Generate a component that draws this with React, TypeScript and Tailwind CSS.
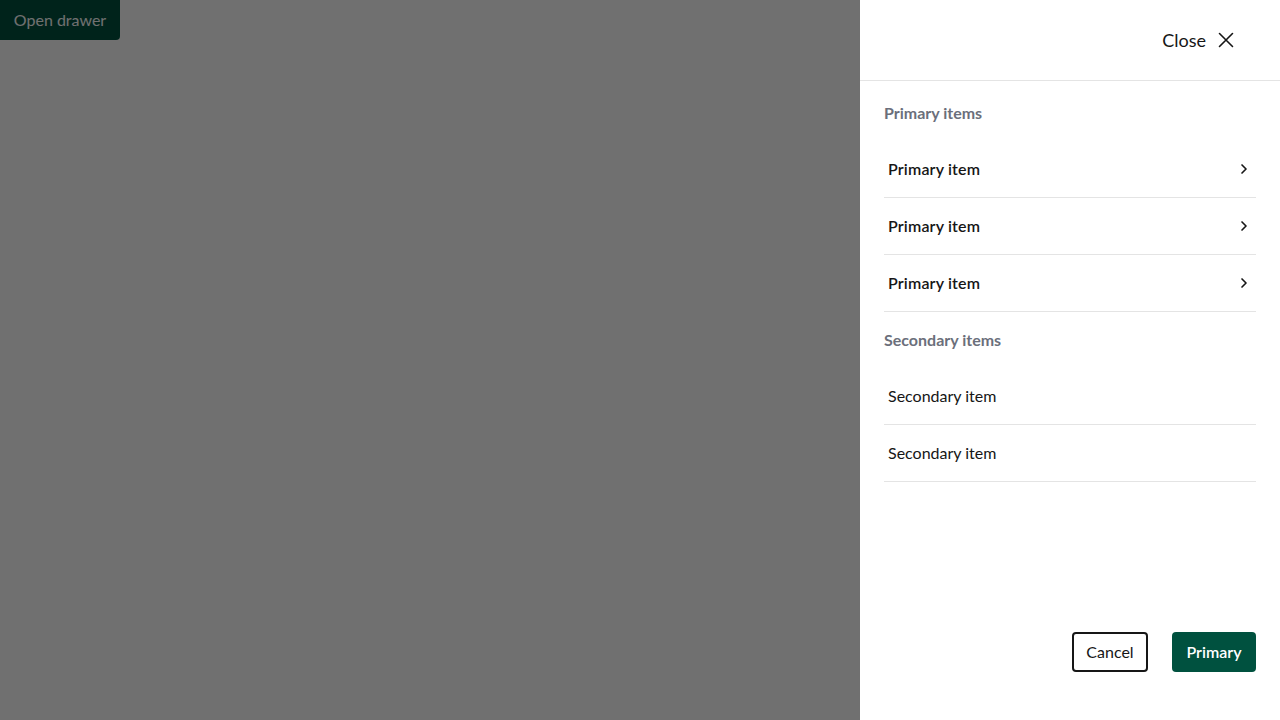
import { ChevronRight } from "lucide-react";

const primaryItems = ["Primary item", "Primary item", "Primary item"];
const secondaryItems = ["Secondary item", "Secondary item"];

function SectionHeading({ children }: { children: string }) {
  return (
    <div className="h-14 flex items-center text-base font-bold text-[#6b6f7b]">
      {children}
    </div>
  );
}

export default function App() {
  return (
    <div className="relative w-[1280px] h-[720px] bg-white overflow-hidden font-['Lato','Noto_Sans',sans-serif]">
      <button className="h-10 w-[120px] bg-[#00513f] text-white text-base rounded-br-sm">
        Open drawer
      </button>

      {/* Overlay */}
      <div className="absolute inset-0 bg-black/[0.56]" />

      {/* Drawer */}
      <aside className="absolute top-0 right-0 bottom-0 w-[420px] bg-white flex flex-col">
        <header className="h-[81px] shrink-0 flex items-center justify-end pr-[46px] border-b border-[#e4e4e4]">
          <button className="flex items-center gap-3 text-[18px] text-[#161616]">
            <span>Close</span>
            <svg width="16" height="16" viewBox="0 0 16 16" fill="none" stroke="#161616" strokeWidth="1.6" strokeLinecap="round">
              <path d="M1.5 1.5 L14.5 14.5 M14.5 1.5 L1.5 14.5" />
            </svg>
          </button>
        </header>

        <div className="flex-1 px-6 pt-1">
          <SectionHeading>Primary items</SectionHeading>
          <ul>
            {primaryItems.map((item, i) => (
              <li
                key={i}
                className="h-[57px] flex items-center justify-between pl-1 pr-1 border-b border-[#e4e4e4] text-base font-semibold tracking-[0.01em] text-[#161616]"
              >
                <span>{item}</span>
                <ChevronRight size={16} strokeWidth={2.5} className="text-[#161616]" />
              </li>
            ))}
          </ul>

          <SectionHeading>Secondary items</SectionHeading>
          <ul>
            {secondaryItems.map((item, i) => (
              <li
                key={i}
                className="h-[57px] flex items-center pl-1 border-b border-[#e4e4e4] text-base text-[#161616]"
              >
                {item}
              </li>
            ))}
          </ul>
        </div>

        <footer className="flex justify-end gap-6 px-6 pb-12">
          <button className="h-10 w-[76px] border-2 border-[#161616] rounded-sm text-base text-[#161616]">
            Cancel
          </button>
          <button className="h-10 w-[84px] bg-[#00513f] rounded-sm text-base font-semibold text-white">
            Primary
          </button>
        </footer>
      </aside>
    </div>
  );
}
